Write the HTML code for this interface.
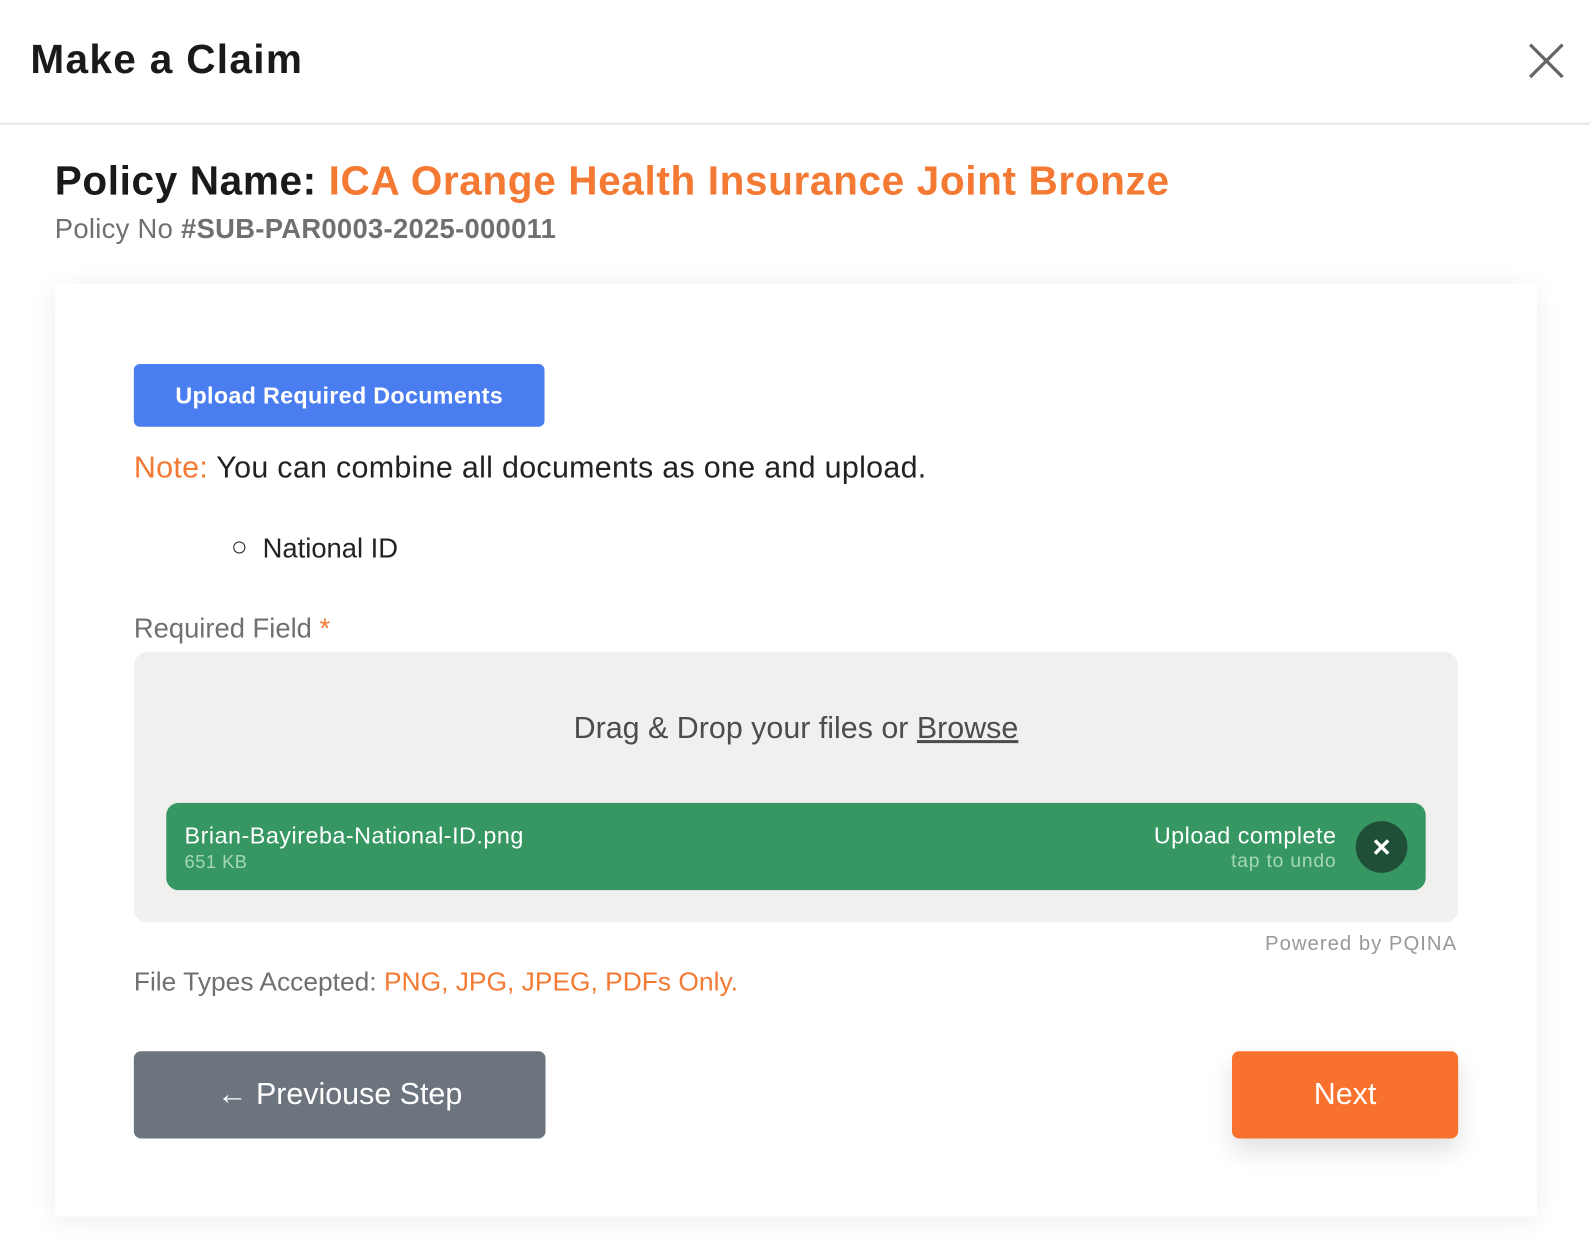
<!DOCTYPE html>
<html><head><meta charset="utf-8"><style>
html,body{margin:0;padding:0;background:#fff;width:1590px;height:1248px;overflow:hidden}
#w{position:absolute;left:0;top:0;width:1568px;height:1231px;transform:scale(1.0140,1.0138);transform-origin:0 0;font-family:"Liberation Sans",sans-serif}
.a{position:absolute;white-space:nowrap}
</style></head><body><div id="w">
<div class="a" style="left:0;top:0;width:1568px;height:121px;border-bottom:2px solid #e4e4e4;background:#fff"></div>
<div class="a" style="left:30px;top:37px;font-size:40px;font-weight:bold;color:#1a1a1a;letter-spacing:1.3px">Make a Claim</div>
<svg class="a" style="left:1506px;top:41px" width="38" height="38" viewBox="0 0 38 38"><path d="M3 3L35 35M35 3L3 35" stroke="#666" stroke-width="3.2" fill="none"/></svg>
<div class="a" style="left:54px;top:157px;font-size:40px;font-weight:bold;color:#1a1a1a;letter-spacing:0.6px">Policy Name: <span style="color:#f47a34">ICA Orange Health Insurance Joint Bronze</span></div>
<div class="a" style="left:54px;top:211px;font-size:27px;color:#707070;letter-spacing:0.3px">Policy No <b>#SUB-PAR0003-2025-000011</b></div>
<div class="a" style="left:54px;top:280px;width:1462px;height:920px;background:#fff;box-shadow:0 4px 24px rgba(0,0,0,0.08)"></div>
<div class="a" style="left:132px;top:359px;width:405px;height:62px;border-radius:6px;background:#4a7df0;color:#fff;font-size:23px;font-weight:bold;line-height:62px;text-align:center;letter-spacing:0.3px">Upload Required Documents</div>
<div class="a" style="left:132px;top:445px;font-size:30px;color:#222;letter-spacing:0.3px"><span style="color:#f47a34">Note:</span> You can combine all documents as one and upload.</div>
<div class="a" style="left:230px;top:534px;width:10px;height:10px;border:1.5px solid #222;border-radius:50%"></div>
<div class="a" style="left:259px;top:526px;font-size:27px;color:#222">National ID</div>
<div class="a" style="left:132px;top:605px;font-size:27px;color:#707070">Required Field <span style="color:#f47a34">*</span></div>
<div class="a" style="left:132px;top:643px;width:1306px;height:267px;border-radius:14px;background:#f1f0ef"></div>
<div class="a" style="left:132px;top:702px;width:1306px;text-align:center;font-size:30px;color:#4d4d4d">Drag &amp; Drop your files or <u>Browse</u></div>
<div class="a" style="left:164px;top:792px;width:1242px;height:86px;border-radius:12px;background:#369763"></div>
<div class="a" style="left:182px;top:811px;font-size:23px;color:#fff;letter-spacing:0.5px">Brian-Bayireba-National-ID.png</div>
<div class="a" style="left:182px;top:840px;font-size:18px;color:#a6d6b9;letter-spacing:0.5px">651 KB</div>
<div class="a" style="left:1000px;width:318px;text-align:right;top:811px;font-size:23px;color:#fff;letter-spacing:0.5px">Upload complete</div>
<div class="a" style="left:1000px;width:318px;text-align:right;top:839px;font-size:19px;color:#a6d6b9;letter-spacing:0.8px">tap to undo</div>
<div class="a" style="left:1337px;top:810px;width:51px;height:51px;border-radius:50%;background:#1f4f36"></div>
<svg class="a" style="left:1354px;top:827px" width="17" height="17" viewBox="0 0 17 17"><path d="M2 2L15 15M15 2L2 15" stroke="#fff" stroke-width="3.4" fill="none"/></svg>
<div class="a" style="left:1100px;width:337px;text-align:right;top:920px;font-size:20px;color:#999;letter-spacing:1px">Powered by PQINA</div>
<div class="a" style="left:132px;top:953px;font-size:26px;color:#707070">File Types Accepted: <span style="color:#f47a34">PNG, JPG, JPEG, PDFs Only.</span></div>
<div class="a" style="left:132px;top:1037px;width:406px;height:86px;border-radius:7px;background:#6c757d;color:#fff;font-size:30px;line-height:86px;text-align:center">&#8592; Previouse Step</div>
<div class="a" style="left:1215px;top:1037px;width:223px;height:86px;border-radius:7px;background:#f9722d;color:#fff;font-size:30px;line-height:86px;text-align:center;box-shadow:0 12px 24px rgba(0,0,0,0.12)">Next</div>
</div></body></html>
